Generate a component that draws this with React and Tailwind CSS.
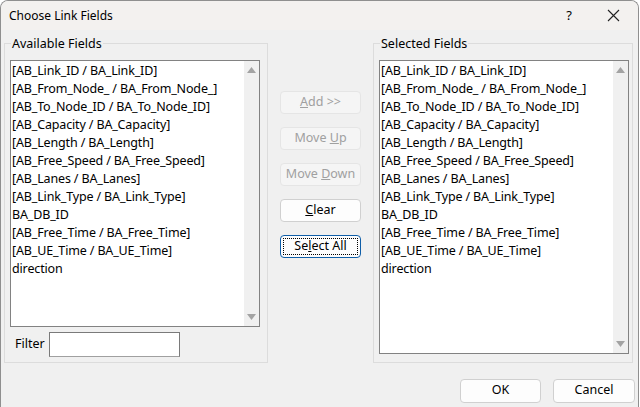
import React from 'react';

const fields = [
  '[AB_Link_ID / BA_Link_ID]',
  '[AB_From_Node_ / BA_From_Node_]',
  '[AB_To_Node_ID / BA_To_Node_ID]',
  '[AB_Capacity / BA_Capacity]',
  '[AB_Length / BA_Length]',
  '[AB_Free_Speed / BA_Free_Speed]',
  '[AB_Lanes / BA_Lanes]',
  '[AB_Link_Type / BA_Link_Type]',
  'BA_DB_ID',
  '[AB_Free_Time / BA_Free_Time]',
  '[AB_UE_Time / BA_UE_Time]',
  'direction',
];

const font = { fontFamily: '"Noto Sans", "Liberation Sans", sans-serif' };

// list box with a fake vertical scroll bar
const ListBox = ({ items, height }) => (
  <div className={`w-[250px] ${height} border border-[#828282] bg-white flex`}>
    <div className="flex-1 pl-[1px] pt-[1px] text-[12.5px] tracking-[-0.15px] leading-[18px] text-black whitespace-nowrap overflow-hidden">
      {items.map((it, i) => (
        <div key={i}>{it}</div>
      ))}
    </div>
    <div className="w-[15px] bg-[#f0f0f0] flex flex-col justify-between items-center py-[6px]">
      <svg width="9" height="6" viewBox="0 0 9 6"><path d="M4.5 0 L9 6 L0 6 Z" fill="#a3a3a3" /></svg>
      <svg width="9" height="6" viewBox="0 0 9 6"><path d="M0 0 L9 0 L4.5 6 Z" fill="#a3a3a3" /></svg>
    </div>
  </div>
);

const Btn = ({ children, disabled, focused, w = 'w-[81px]', h = 'h-[23px]' }) => {
  let cls = 'bg-[#fdfdfd] border-[#d0d0d0] text-black';
  if (disabled) cls = 'bg-[#f5f5f5] border-[#e5e5e5] text-[#a0a0a0]';
  if (focused) cls = 'bg-[#fdfdfd] border-[#0f5ea8] text-black';
  return (
    <div className={`${w} ${h} border rounded-[4px] flex items-center justify-center text-[12.5px] leading-[16px] ${cls}`}>
      {focused ? (
        <span className="w-[75px] h-[17px] border border-dotted border-black flex items-center justify-center pb-[1px]">{children}</span>
      ) : <span className="pb-[2px]">{children}</span>}
    </div>
  );
};

const App = () => {
  return (
    <div className="w-[640px] h-[407px] bg-white" style={font}>
      <div className="w-[639px] h-[407px] border-x border-t border-[#8f8f8f] rounded-t-[8px] overflow-hidden bg-[#f0f0f0] flex flex-col">
        {/* title bar */}
        <div className="h-[29px] bg-[#f3f1ef] flex items-center text-[12px] text-black">
          <span className="ml-[8px] flex-1">Choose Link Fields</span>
          <span className="w-[20px] text-center text-[13px] mr-[28px]">?</span>
          <svg width="13" height="13" viewBox="0 0 13 13" className="mr-[18px]">
            <path d="M1 1 L12 12 M12 1 L1 12" stroke="#222" strokeWidth="1.1" />
          </svg>
        </div>

        <div className="flex mt-[13px]">
          {/* Available */}
          <div className="relative ml-[3px] w-[264px] h-[320px] border border-[#dcdcdc] pl-[5px] pt-[16px]">
            <span className="absolute left-[6px] top-[-9px] px-[1px] bg-[#f0f0f0] text-[12.5px] leading-[18px]">Available Fields</span>
            <ListBox items={fields} height="h-[267px]" />
            <div className="flex items-center mt-[5px]">
              <span className="ml-[5px] text-[12.5px] w-[34px]">Filter</span>
              <div className="w-[131px] h-[25px] border border-[#7a7a7a] border-b-[#a0a0a0] bg-white" />
            </div>
          </div>

          {/* buttons */}
          <div className="ml-[12px] mt-[48px] flex flex-col gap-[13px]">
            <Btn disabled><u>A</u>dd &gt;&gt;</Btn>
            <Btn disabled>Move <u>U</u>p</Btn>
            <Btn disabled>Move <u>D</u>own</Btn>
            <Btn><u>C</u>lear</Btn>
            <Btn focused>Se<u>l</u>ect All</Btn>
          </div>

          {/* Selected */}
          <div className="relative ml-[12px] w-[260px] h-[320px] border border-[#dcdcdc] pl-[5px] pt-[16px]">
            <span className="absolute left-[6px] top-[-9px] px-[1px] bg-[#f0f0f0] text-[12.5px] leading-[18px]">Selected Fields</span>
            <ListBox items={fields} height="h-[294px]" />
          </div>
        </div>

        {/* footer */}
        <div className="flex justify-end gap-[12px] mt-[16px] mr-[3px]">
          <Btn w="w-[81px]" h="h-[24px]">OK</Btn>
          <Btn w="w-[82px]" h="h-[24px]">Cancel</Btn>
        </div>
      </div>
    </div>
  );
};

export default App;
